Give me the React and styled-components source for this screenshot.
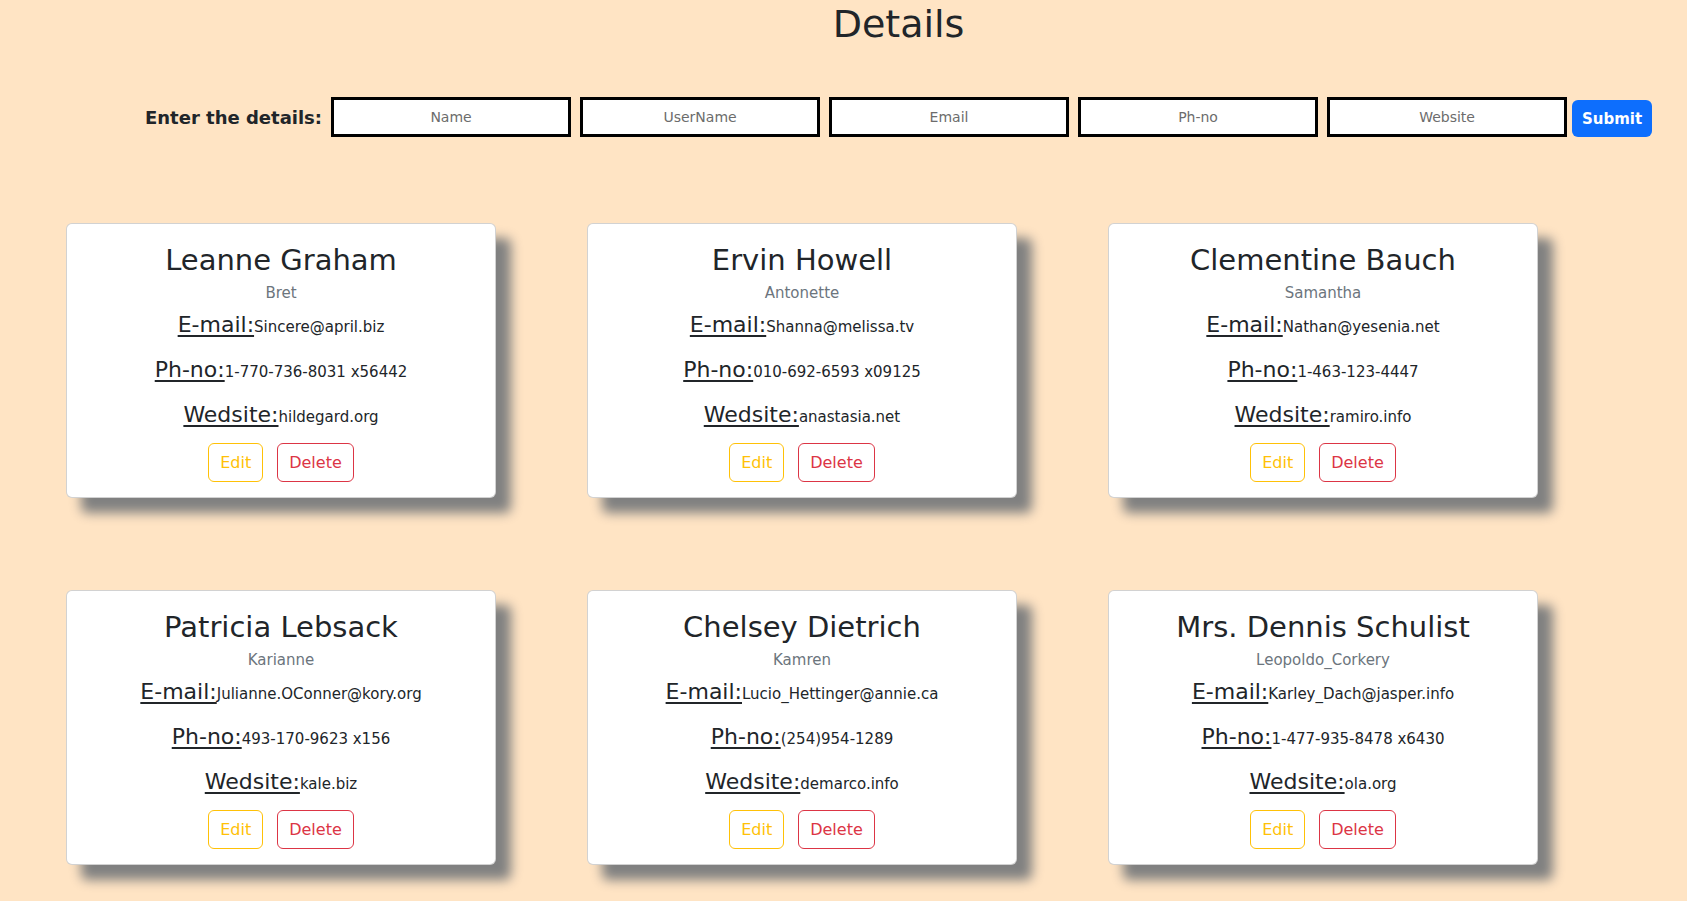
import React from 'react';
import styled, { createGlobalStyle } from 'styled-components';

const users = [
    { name: 'Leanne Graham', username: 'Bret', email: 'Sincere@april.biz', phone: '1-770-736-8031 x56442', website: 'hildegard.org' },
    { name: 'Ervin Howell', username: 'Antonette', email: 'Shanna@melissa.tv', phone: '010-692-6593 x09125', website: 'anastasia.net' },
    { name: 'Clementine Bauch', username: 'Samantha', email: 'Nathan@yesenia.net', phone: '1-463-123-4447', website: 'ramiro.info' },
    { name: 'Patricia Lebsack', username: 'Karianne', email: 'Julianne.OConner@kory.org', phone: '493-170-9623 x156', website: 'kale.biz' },
    { name: 'Chelsey Dietrich', username: 'Kamren', email: 'Lucio_Hettinger@annie.ca', phone: '(254)954-1289', website: 'demarco.info' },
    { name: 'Mrs. Dennis Schulist', username: 'Leopoldo_Corkery', email: 'Karley_Dach@jasper.info', phone: '1-477-935-8478 x6430', website: 'ola.org' },
];

const fields = ['Name', 'UserName', 'Email', 'Ph-no', 'Website'];

function App() {
    return (
        <>
            <GlobalStyle />
            <Page>
                <Header>
                    <Title>Details</Title>
                    <Form onSubmit={e => e.preventDefault()}>
                        <FormLabel>Enter the details:</FormLabel>
                        {fields.map(f => <Field key={f} placeholder={f} />)}
                        <SubmitButton type="submit">Submit</SubmitButton>
                    </Form>
                </Header>

                <CardGrid>
                    {users.map(u => (
                        <Card key={u.username}>
                            <Name>{u.name}</Name>
                            <Username>{u.username}</Username>
                            <DetailLine><u>E-mail:</u><span>{u.email}</span></DetailLine>
                            <DetailLine><u>Ph-no:</u><span>{u.phone}</span></DetailLine>
                            <DetailLine><u>Wedsite:</u><span>{u.website}</span></DetailLine>
                            <Actions>
                                <OutlineButton color="#ffc107">Edit</OutlineButton>
                                <OutlineButton color="#dc3545">Delete</OutlineButton>
                            </Actions>
                        </Card>
                    ))}
                </CardGrid>
            </Page>
        </>
    )
}

export default App;

const GlobalStyle = createGlobalStyle`
body {
    margin: 0;
    background-color: bisque;
    color: #212529;
    font-family: "Comic Sans MS", "DejaVu Sans", sans-serif;
}
* {
    box-sizing: border-box;
}
`

const Page = styled.main`
    min-height: 100vh;
    padding-bottom: 40px;
`

const Header = styled.header`
    padding-left: 110px;
    text-align: center;
`

const Title = styled.h1`
    margin: 0;
    font-size: 38px;
    font-weight: 400;
    line-height: 48px;
`

const Form = styled.form`
    margin-top: 49px;
    display: flex;
    justify-content: center;
    align-items: center;
    gap: 9px;
`

const FormLabel = styled.label`
    font-weight: 700;
    font-size: 18px;
`

const Field = styled.input`
    width: 240px;
    height: 40px;
    border: 3px solid #000;
    background: #fff;
    text-align: center;
    font-family: inherit;
    font-size: 14px;
    color: #212529;
    &::placeholder {
        color: #6c6c6c;
    }
`

const SubmitButton = styled.button`
    margin-left: -4px;
    margin-top: 3px;
    width: 80px;
    height: 37px;
    border: none;
    border-radius: 6px;
    background-color: #0d6efd;
    color: #fff;
    font-family: inherit;
    font-weight: 700;
    font-size: 15px;
`

const CardGrid = styled.section`
    margin-top: 86px;
    padding-left: 66px;
    display: grid;
    grid-template-columns: repeat(3, 430px);
    column-gap: 91px;
    row-gap: 92px;
`

const Card = styled.article`
    background: #fff;
    border: 1px solid rgba(0, 0, 0, 0.175);
    border-radius: 6px;
    box-shadow: 15px 15px 12px #808080;
    padding: 17px 16px 15px;
    text-align: center;
    display: flex;
    flex-direction: column;
    align-items: center;
`

const Name = styled.h2`
    margin: 0;
    font-size: 29px;
    font-weight: 400;
    line-height: 38px;
`

const Username = styled.div`
    margin-top: 2px;
    font-size: 15px;
    line-height: 24px;
    color: #6c757d;
`

const DetailLine = styled.p`
    margin: 2px 0 7px;
    height: 36px;
    line-height: 36px;
    font-size: 15px;

    u {
        font-size: 22px;
        text-underline-offset: 3px;
    }
`

const Actions = styled.div`
    margin-top: 3px;
    display: flex;
    gap: 14px;
`

const OutlineButton = styled.button`
    height: 39px;
    padding: 0 11px;
    border: 1px solid ${p => p.color};
    border-radius: 6px;
    background: transparent;
    color: ${p => p.color};
    font-family: inherit;
    font-size: 16px;
`
